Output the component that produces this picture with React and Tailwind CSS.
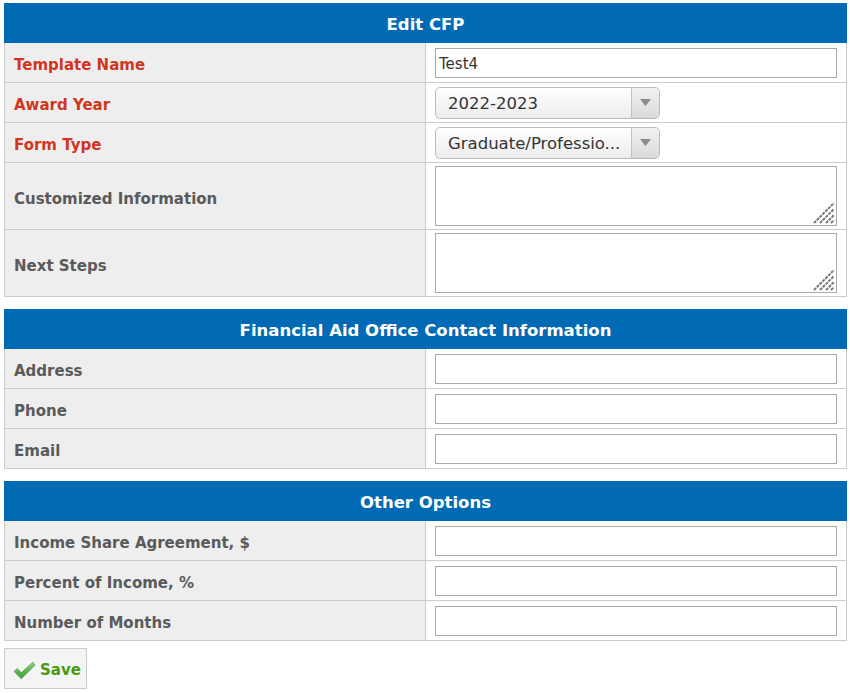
import React from 'react';

const font = { fontFamily: '"DejaVu Sans", Verdana, sans-serif' };

const SectionHeader = ({ title }) => (
  <div className="h-[40px] bg-[#006bb4] text-white font-bold text-[16.5px] flex items-center justify-center pt-[4px]">
    {title}
  </div>
);

const Row = ({ label, required, tall, children }) => (
  <div className={`grid grid-cols-[421px_1fr] ${tall ? 'h-[67px]' : 'h-[40px]'} border-b border-[#cccccc]`}>
    <div className={`bg-[#eeeeee] border-r border-[#cccccc] flex items-center pl-[9px] pt-[6px] font-bold text-[15px] ${required ? 'text-[#d1361d]' : 'text-[#5a5a5a]'}`}>
      {label}
    </div>
    <div className="flex items-center px-[9px] bg-white">{children}</div>
  </div>
);

const TextInput = ({ value = '' }) => (
  <input
    readOnly
    value={value}
    className="w-full h-[30px] border border-[#aaaaaa] bg-white px-[3px] pt-[3px] text-[15px] text-[#333] outline-none"
    style={font}
  />
);

const FakeSelect = ({ value }) => (
  <div className="w-[225px] h-[32px] rounded-[5px] border border-[#bbbbbb] bg-gradient-to-b from-white to-[#ececec] flex items-stretch">
    <div className="flex-1 min-w-0 flex items-center pl-[12px] pt-[3px] text-[16.5px] text-[#333] whitespace-nowrap">
      {value}
    </div>
    <div className="w-[28px] border-l border-[#c4c4c4] bg-gradient-to-b from-[#f2f2f2] to-[#d9d9d9] rounded-r-[5px] flex items-center justify-center">
      <svg width="11" height="7" viewBox="0 0 11 7">
        <path d="M0 0 H11 L5.5 7 Z" fill="#8a8a8a" />
      </svg>
    </div>
  </div>
);

const TextArea = () => (
  <div className="relative w-full h-[60px] border border-[#aaaaaa] bg-white mt-[-1px]">
    <svg className="absolute right-[1px] bottom-[1px]" width="22" height="22" viewBox="0 0 22 22">
      <g stroke="#777777" strokeWidth="2" strokeDasharray="3 1">
        <line x1="1" y1="21" x2="21" y2="1" />
        <line x1="7" y1="21" x2="21" y2="7" />
        <line x1="13" y1="21" x2="21" y2="13" />
        <line x1="18" y1="21" x2="21" y2="18" />
      </g>
    </svg>
  </div>
);

const Section = ({ title, children, className = '' }) => (
  <div className={`w-[843px] ml-[4px] ${className}`}>
    <SectionHeader title={title} />
    <div className="border-l border-r border-[#cccccc]">{children}</div>
  </div>
);

export default function App() {
  return (
    <div className="bg-white w-[850px] h-[693px] pt-[3px]" style={font}>
      <Section title="Edit CFP">
        <Row label="Template Name" required>
          <TextInput value="Test4" />
        </Row>
        <Row label="Award Year" required>
          <FakeSelect value="2022-2023" />
        </Row>
        <Row label="Form Type" required>
          <FakeSelect value="Graduate/Professio..." />
        </Row>
        <Row label="Customized Information" tall>
          <TextArea />
        </Row>
        <Row label="Next Steps" tall>
          <TextArea />
        </Row>
      </Section>

      <Section title="Financial Aid Office Contact Information" className="mt-[12px]">
        <Row label="Address"><TextInput /></Row>
        <Row label="Phone"><TextInput /></Row>
        <Row label="Email"><TextInput /></Row>
      </Section>

      <Section title="Other Options" className="mt-[12px]">
        <Row label="Income Share Agreement, $"><TextInput /></Row>
        <Row label="Percent of Income, %"><TextInput /></Row>
        <Row label="Number of Months"><TextInput /></Row>
      </Section>

      <button className="ml-[4px] mt-[7px] w-[83px] h-[41px] bg-[#f4f4f4] border border-[#cccccc] flex items-center pl-[8px] gap-[4px] text-[#4b9a10] font-bold text-[15px] pt-[4px]">
        <svg width="23" height="19" viewBox="0 0 22 18">
          <defs>
            <linearGradient id="chk" x1="0" y1="0" x2="0" y2="1">
              <stop offset="0" stopColor="#8fd07a" />
              <stop offset="1" stopColor="#3f9a36" />
            </linearGradient>
          </defs>
          <path d="M1 10 L4 7 L8 11 L19 1 L21 4 L8 17 Z" fill="url(#chk)" stroke="#4a9a3e" strokeWidth="0.6" strokeLinejoin="round" />
        </svg>
        Save
      </button>
    </div>
  );
}
